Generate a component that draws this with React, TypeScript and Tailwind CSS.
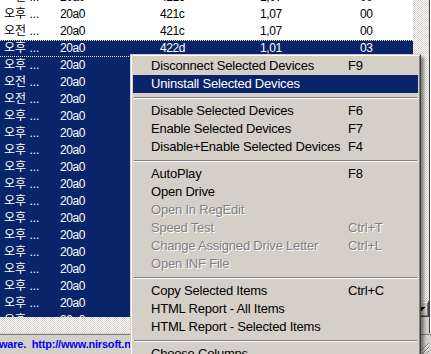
import React from "react";

type Row = { d: string; c3?: string; c4?: string; c5?: string; sel?: boolean; focus?: boolean };

const rows: Row[] = [
  { d: "오전" },
  { d: "오후" },
  { d: "오전" },
  { d: "오후", c3: "422d", c4: "1,01", c5: "03", sel: true, focus: true },
  { d: "오후", sel: true },
  { d: "오전", sel: true },
  { d: "오전", sel: true },
  ...Array.from({ length: 14 }, () => ({ d: "오후", sel: true })),
];

function ListRow({ r }: { r: Row }) {
  return (
    <div
      className={`flex h-[17px] items-center whitespace-nowrap leading-[15px] ${
        r.sel ? "bg-[#0a246a] text-white" : "text-black"
      } ${r.focus ? "border-y border-dotted border-[#f2e19a]" : ""}`}
    >
      <span className="w-[60px] shrink-0 pl-[4px]">{r.d} ...</span>
      <span className="w-[100px] shrink-0 tracking-[-0.4px]">20a0</span>
      <span className="w-[100px] shrink-0 tracking-[-0.4px]">{r.c3 ?? "421c"}</span>
      <span className="w-[100px] shrink-0 tracking-[-0.4px]">{r.c4 ?? "1,07"}</span>
      <span className="tracking-[-0.4px]">{r.c5 ?? "00"}</span>
    </div>
  );
}

function Item({
  label,
  shortcut,
  disabled,
  hl,
}: {
  label: string;
  shortcut?: string;
  disabled?: boolean;
  hl?: boolean;
}) {
  return (
    <div
      className={`flex h-[18px] items-center whitespace-nowrap pl-[18px] ${
        hl
          ? "bg-[#0a246a] text-white"
          : disabled
          ? "text-[#808080] [text-shadow:1px_1px_0_#ffffff]"
          : "text-black"
      }`}
    >
      <span className="w-[197px] shrink-0">{label}</span>
      <span>{shortcut}</span>
    </div>
  );
}

function Sep() {
  return (
    <div className="h-[9px] px-px pt-[4px]">
      <div className="h-px bg-[#808080]" />
      <div className="h-px bg-white" />
    </div>
  );
}

const checker =
  "bg-[image:repeating-conic-gradient(#d4d0c8_0_25%,#ffffff_0_50%)] bg-[length:2px_2px]";

export default function App() {
  return (
    <div className="relative h-[354px] w-[431px] overflow-hidden bg-[#d4d0c8] font-['Liberation_Sans','Noto_Sans_CJK_KR',sans-serif]">
      <div className="flex h-[333px]">
        <div className="flex w-[429px] flex-col">
          <div className="flex h-[317px]">
            <div className="w-[413px] overflow-hidden bg-white text-[12px]">
              <div className="mt-[-11px]">
                {rows.map((r, i) => (
                  <ListRow key={i} r={r} />
                ))}
              </div>
            </div>
            <div className="flex w-[16px] flex-col">
              <div className={`flex-1 ${checker}`} />
              <div className="h-[16px] border border-t-[#d4d0c8] border-l-[#d4d0c8] border-r-[#404040] border-b-[#404040] bg-[#d4d0c8]">
                <div className="flex h-full items-center justify-center border border-t-white border-l-white border-r-[#808080] border-b-[#808080]">
                  <svg width="7" height="4" viewBox="0 0 7 4">
                    <path d="M0 0h7v1h-1v1h-1v1h-1v1h-1v-1h-1v-1h-1v-1h-1z" fill="#000" />
                  </svg>
                </div>
              </div>
            </div>
          </div>
          <div className="flex h-[16px]">
            <div className={`w-[413px] ${checker}`} />
            <div className="w-[16px] bg-[#d4d0c8]" />
          </div>
        </div>
        <div className="w-px bg-[#404040]" />
        <div className="w-px bg-white" />
      </div>
      <div className="h-px bg-[#d4d0c8]" />
      <div className="h-px bg-[#808080]" />
      <div className="flex h-[19px] items-center justify-between">
        <span className="ml-[-1px] whitespace-pre text-[11px] font-bold tracking-[-0.2px] text-[#0000ff]">
          ware.  http://www.nirsoft.net
        </span>
        <svg width="12" height="12" viewBox="0 0 12 12" className="mr-px mt-[6px]">
          <path d="M11 1L1 11M11 5L5 11M11 9L9 11" stroke="#808080" strokeWidth="1" />
          <path d="M11 2L2 11M11 6L6 11M11 10L10 11" stroke="#ffffff" strokeWidth="1" />
        </svg>
      </div>

      <div className="absolute left-[130px] top-[54px] w-[291px] border border-t-[#d4d0c8] border-l-[#d4d0c8] border-r-[#404040] border-b-[#404040] bg-[#d4d0c8] text-[13px] tracking-[-0.2px] shadow-[3px_3px_3px_rgba(0,0,0,0.45)]">
        <div className="border border-t-white border-l-white border-r-[#808080] border-b-[#808080] p-px">
          <Item label="Disconnect Selected Devices" shortcut="F9" />
          <Item label="Uninstall Selected Devices" hl />
          <Sep />
          <Item label="Disable Selected Devices" shortcut="F6" />
          <Item label="Enable Selected Devices" shortcut="F7" />
          <Item label="Disable+Enable Selected Devices" shortcut="F4" />
          <Sep />
          <Item label="AutoPlay" shortcut="F8" />
          <Item label="Open Drive" />
          <Item label="Open In RegEdit" disabled />
          <Item label="Speed Test" shortcut="Ctrl+T" disabled />
          <Item label="Change Assigned Drive Letter" shortcut="Ctrl+L" disabled />
          <Item label="Open INF File" disabled />
          <Sep />
          <Item label="Copy Selected Items" shortcut="Ctrl+C" />
          <Item label="HTML Report - All Items" />
          <Item label="HTML Report - Selected Items" />
          <Sep />
          <Item label="Choose Columns" />
          <Item label="Auto Size Columns" shortcut="Ctrl+Plus" />
        </div>
      </div>
    </div>
  );
}
